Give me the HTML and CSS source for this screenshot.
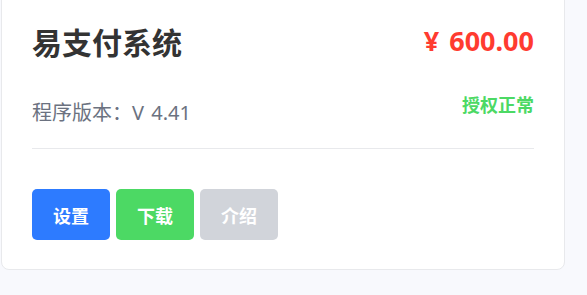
FILE: index.html
```html
<!DOCTYPE html>
<html lang="zh-CN">
<head>
    <meta charset="UTF-8">
    <meta name="viewport" content="width=device-width, initial-scale=1.0">
    <title>易支付系统</title>
    <link rel="stylesheet" href="styles.css">
</head>
<body>
    <div class="page">
        <div class="card">
            <div class="card-head">
                <h1 class="app-name">易支付系统</h1>
                <span class="price">¥ 600.00</span>
            </div>
            <div class="card-meta">
                <span class="version">程序版本：V 4.41</span>
                <span class="status">授权正常</span>
            </div>
            <div class="card-actions">
                <button class="btn btn-blue">设置</button>
                <button class="btn btn-green">下载</button>
                <button class="btn btn-gray">介绍</button>
            </div>
        </div>
    </div>
</body>
</html>
```

FILE: styles.css
```css
body {
    margin: 0;
    background-color: #f8f9fd;
    font-family: "Noto Sans", "Noto Sans CJK SC", sans-serif;
}
.page {
    padding: 0 22px 0 1px;
}
.card {
    margin-top: -10px;
    background-color: #fff;
    border: 1px solid #e8e9ec;
    border-radius: 8px;
    padding: 30px 30px 29px;
}
.card-head {
    display: flex;
    justify-content: space-between;
    align-items: flex-start;
}
.app-name {
    margin: 0;
    font-size: 30px;
    line-height: 44px;
    font-weight: bold;
    color: #333;
}
.price {
    font-size: 27px;
    line-height: 40px;
    font-weight: bold;
    word-spacing: 3px;
    color: #ff3b30;
}
.card-meta {
    display: flex;
    justify-content: space-between;
    align-items: flex-start;
    margin-top: 33px;
    padding-bottom: 20px;
    border-bottom: 1px solid #e8e9ec;
}
.version {
    font-size: 20px;
    line-height: 30px;
    word-spacing: 2px;
    color: #6b7280;
}
.status {
    margin-top: -4px;
    font-size: 18px;
    line-height: 22px;
    font-weight: bold;
    color: #4cd964;
}
.card-actions {
    display: flex;
    gap: 6px;
    margin-top: 40px;
}
.btn {
    width: 78px;
    height: 51px;
    border: none;
    border-radius: 5px;
    color: #fff;
    font-family: inherit;
    font-size: 18px;
    font-weight: bold;
    cursor: pointer;
}
.btn-blue { background-color: #2d7bff; }
.btn-green { background-color: #4cd964; }
.btn-gray { background-color: #d1d4da; }
```
